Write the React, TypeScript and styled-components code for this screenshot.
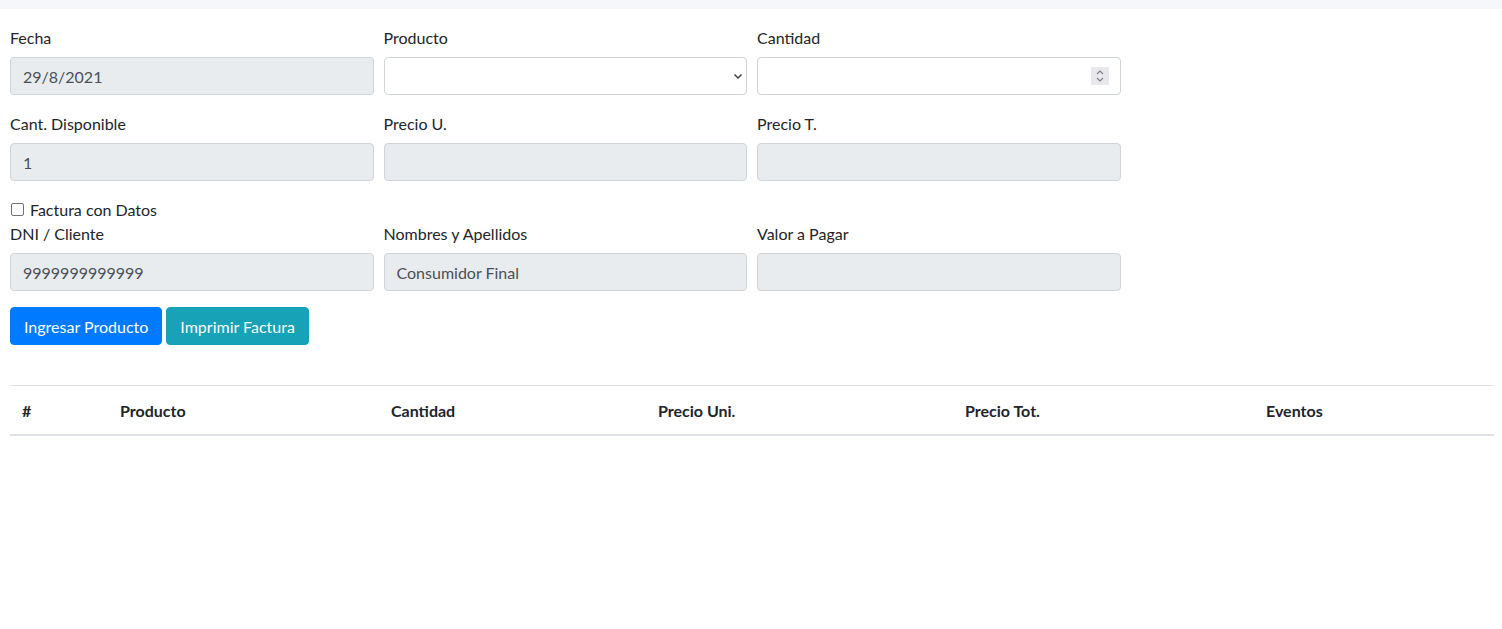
import React from "react";
import styled, { createGlobalStyle } from "styled-components";

const Global = createGlobalStyle`
  html, body { margin: 0; padding: 0; background: #fff; }
  body {
    font-family: Lato, "Noto Sans", sans-serif;
    font-size: 16px;
    line-height: 24px;
    color: #212529;
  }
  * { box-sizing: border-box; }
`;

const TopBar = styled.div`
  height: 9px;
  background: #f6f7fa;
`;

const Page = styled.div`
  padding: 16px 8px 0 10px;
`;

const Row = styled.div`
  display: grid;
  grid-template-columns: repeat(4, 1fr);
  column-gap: 10px;
`;

const Group = styled.div`
  margin-bottom: 16px;
`;

const Label = styled.label`
  display: block;
  margin-bottom: 8px;
  line-height: 24px;
  padding-top: 1px;
  height: 24px;
`;

const Input = styled.input`
  display: block;
  width: 100%;
  height: 38px;
  padding: 6px 12px;
  font: inherit;
  font-size: 16px;
  line-height: 24px;
  color: #495057;
  background: ${(p) => (p.disabled ? "#e9ecef" : "#fff")};
  border: 1px solid #ced4da;
  border-radius: 4px;
  outline: none;
  -moz-appearance: textfield;
  &::-webkit-outer-spin-button,
  &::-webkit-inner-spin-button {
    -webkit-appearance: none;
    margin: 0;
  }
`;

const FieldWrap = styled.div`
  position: relative;
`;

const Select = styled.select`
  display: block;
  width: 100%;
  height: 38px;
  padding: 6px 12px;
  font: inherit;
  color: #495057;
  background: #fff;
  border: 1px solid #ced4da;
  border-radius: 4px;
  appearance: none;
  -webkit-appearance: none;
  outline: none;
`;

const Chevron = styled.svg`
  position: absolute;
  right: 4px;
  top: 15px;
  pointer-events: none;
`;

const Spinner = styled.div`
  position: absolute;
  right: 12px;
  top: 10px;
  width: 18px;
  height: 18px;
  background: #e9e9ed;
  display: flex;
  align-items: center;
  justify-content: center;
  pointer-events: none;
`;

const CheckLine = styled.div`
  display: flex;
  align-items: center;
  height: 24px;
  padding-top: 1px;
`;

const Check = styled.input`
  appearance: none;
  -webkit-appearance: none;
  width: 13px;
  height: 13px;
  margin: 0 6px 0 10px;
  margin-left: 1px;
  border: 1.5px solid #6f6f74;
  border-radius: 2px;
  background: #fff;
`;

const Buttons = styled.div`
  display: flex;
  gap: 4px;
`;

const Button = styled.button<{ $variant: "primary" | "info" }>`
  font: inherit;
  font-size: 16px;
  line-height: 24px;
  padding: 7px 13px 5px;
  color: #fff;
  border-radius: 4px;
  border: 1px solid ${(p) => (p.$variant === "primary" ? "#007bff" : "#17a2b8")};
  background: ${(p) => (p.$variant === "primary" ? "#007bff" : "#17a2b8")};
  cursor: pointer;
`;

const Table = styled.table`
  width: 100%;
  margin-top: 40px;
  border-collapse: collapse;
  table-layout: fixed;
`;

const Th = styled.th<{ $w: number }>`
  width: ${(p) => p.$w}px;
  text-align: left;
  padding: 13px 12px 11px;
  font-weight: 700;
  line-height: 24px;
  border-top: 1px solid #dee2e6;
  border-bottom: 2px solid #dee2e6;
`;

export default function App() {
  return (
    <>
      <Global />
      <TopBar />
      <Page>
        <Row>
          <Group>
            <Label>Fecha</Label>
            <Input disabled value="29/8/2021" readOnly />
          </Group>
          <Group>
            <Label>Producto</Label>
            <FieldWrap>
              <Select defaultValue="">
                <option value=""></option>
              </Select>
              <Chevron width="10" height="8" viewBox="0 0 10 8">
                <path d="M1.5 2.5 L5 6 L8.5 2.5" fill="none" stroke="#3c4043" strokeWidth="1.5" />
              </Chevron>
            </FieldWrap>
          </Group>
          <Group>
            <Label>Cantidad</Label>
            <FieldWrap>
              <Input type="number" />
              <Spinner>
                <svg width="10" height="14" viewBox="0 0 10 14">
                  <path d="M2 5 L5 2 L8 5" fill="none" stroke="#7a7a80" strokeWidth="1.1" />
                  <path d="M2 9 L5 12 L8 9" fill="none" stroke="#7a7a80" strokeWidth="1.1" />
                </svg>
              </Spinner>
            </FieldWrap>
          </Group>
        </Row>
        <Row>
          <Group>
            <Label>Cant. Disponible</Label>
            <Input disabled value="1" readOnly />
          </Group>
          <Group>
            <Label>Precio U.</Label>
            <Input disabled readOnly />
          </Group>
          <Group>
            <Label>Precio T.</Label>
            <Input disabled readOnly />
          </Group>
        </Row>
        <CheckLine>
          <Check type="checkbox" />
          <span>Factura con Datos</span>
        </CheckLine>
        <Row>
          <Group>
            <Label>DNI / Cliente</Label>
            <Input disabled value="9999999999999" readOnly />
          </Group>
          <Group>
            <Label>Nombres y Apellidos</Label>
            <Input disabled value="Consumidor Final" readOnly />
          </Group>
          <Group>
            <Label>Valor a Pagar</Label>
            <Input disabled readOnly />
          </Group>
        </Row>
        <Buttons>
          <Button $variant="primary">Ingresar Producto</Button>
          <Button $variant="info">Imprimir Factura</Button>
        </Buttons>
        <Table>
          <thead>
            <tr>
              <Th $w={98}>#</Th>
              <Th $w={271}>Producto</Th>
              <Th $w={267}>Cantidad</Th>
              <Th $w={307}>Precio Uni.</Th>
              <Th $w={301}>Precio Tot.</Th>
              <Th $w={240}>Eventos</Th>
            </tr>
          </thead>
        </Table>
      </Page>
    </>
  );
}
